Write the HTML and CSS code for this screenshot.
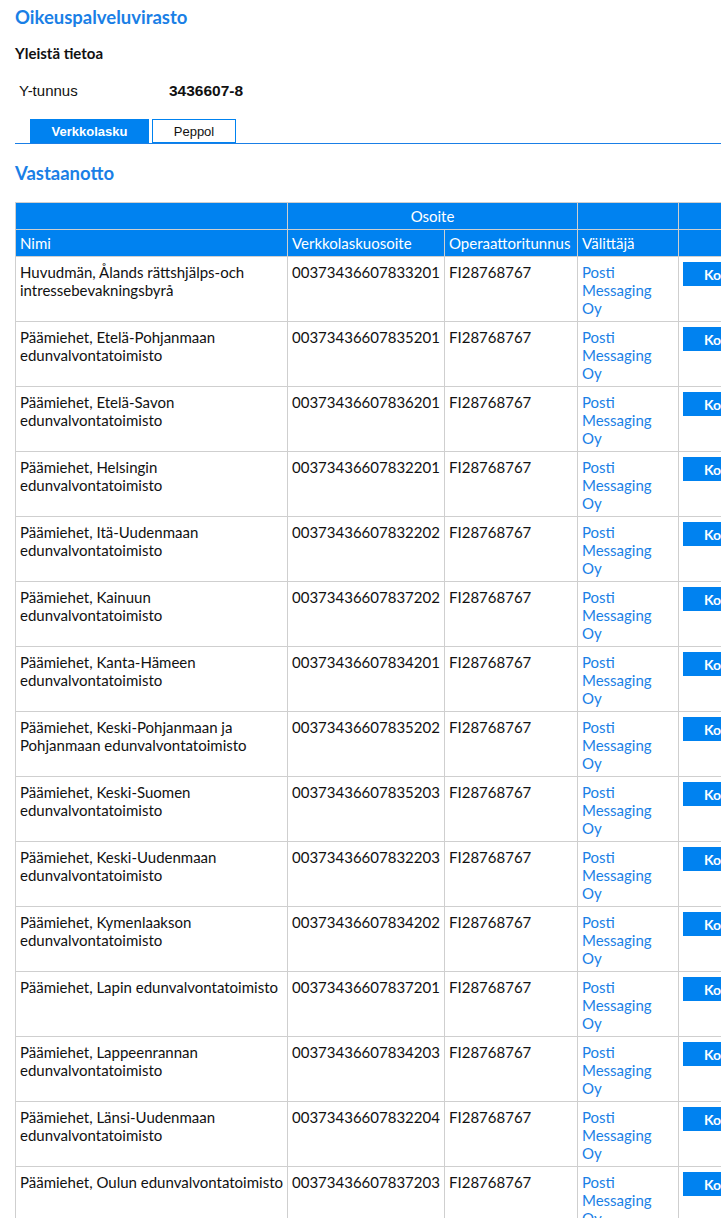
FILE: index.html
```html
<!DOCTYPE html>
<html lang="fi">
<head>
    <meta charset="UTF-8">
    <meta name="viewport" content="width=device-width, initial-scale=1.0">
    <title>Oikeuspalveluvirasto</title>
    <link rel="stylesheet" href="styles.css">
</head>
<body>
    <div class="page">
        <h1 class="org-title">Oikeuspalveluvirasto</h1>

        <h2 class="section-title">Yleistä tietoa</h2>
        <table class="info-table">
            <tr>
                <td class="info-label">Y-tunnus</td>
                <td class="info-value">3436607-8</td>
            </tr>
        </table>

        <div class="tabs">
            <button class="tab active">Verkkolasku</button>
            <button class="tab">Peppol</button>
        </div>

        <h2 class="sub-title">Vastaanotto</h2>

        <table class="address-table">
            <colgroup>
                <col class="col-name">
                <col class="col-address">
                <col class="col-operator">
                <col class="col-broker">
                <col class="col-action">
            </colgroup>
            <thead>
                <tr>
                    <th></th>
                    <th colspan="2" class="center">Osoite</th>
                    <th></th>
                    <th></th>
                </tr>
                <tr>
                    <th>Nimi</th>
                    <th>Verkkolaskuosoite</th>
                    <th>Operaattoritunnus</th>
                    <th>Välittäjä</th>
                    <th></th>
                </tr>
            </thead>
            <tbody id="rows"></tbody>
        </table>
    </div>

    <script>
        const rows = [
            ['Huvudmän, Ålands rättshjälps-och intressebevakningsbyrå', '00373436607833201'],
            ['Päämiehet, Etelä-Pohjanmaan edunvalvontatoimisto', '00373436607835201'],
            ['Päämiehet, Etelä-Savon edunvalvontatoimisto', '00373436607836201'],
            ['Päämiehet, Helsingin edunvalvontatoimisto', '00373436607832201'],
            ['Päämiehet, Itä-Uudenmaan edunvalvontatoimisto', '00373436607832202'],
            ['Päämiehet, Kainuun edunvalvontatoimisto', '00373436607837202'],
            ['Päämiehet, Kanta-Hämeen edunvalvontatoimisto', '00373436607834201'],
            ['Päämiehet, Keski-Pohjanmaan ja Pohjanmaan edunvalvontatoimisto', '00373436607835202'],
            ['Päämiehet, Keski-Suomen edunvalvontatoimisto', '00373436607835203'],
            ['Päämiehet, Keski-Uudenmaan edunvalvontatoimisto', '00373436607832203'],
            ['Päämiehet, Kymenlaakson edunvalvontatoimisto', '00373436607834202'],
            ['Päämiehet, Lapin edunvalvontatoimisto', '00373436607837201'],
            ['Päämiehet, Lappeenrannan edunvalvontatoimisto', '00373436607834203'],
            ['Päämiehet, Länsi-Uudenmaan edunvalvontatoimisto', '00373436607832204'],
            ['Päämiehet, Oulun edunvalvontatoimisto', '00373436607837203'],
            ['Päämiehet, Pirkanmaan edunvalvontatoimisto', '00373436607834204']
        ];

        const tbody = document.getElementById('rows');
        rows.forEach(function (row) {
            const tr = document.createElement('tr');
            tr.innerHTML =
                '<td>' + row[0] + '</td>' +
                '<td>' + row[1] + '</td>' +
                '<td>FI28768767</td>' +
                '<td><a href="#" class="broker-link">Posti Messaging Oy</a></td>' +
                '<td><button class="copy-btn">Kopioi</button></td>';
            tbody.appendChild(tr);
        });
    </script>
</body>
</html>
```

FILE: styles.css
```css
* {
    margin: 0;
    padding: 0;
    box-sizing: border-box;
}

body {
    font-family: 'Lato', 'Liberation Sans', sans-serif;
    color: #111;
    background: #fff;
}

.page {
    padding: 6px 0 0 15px;
}

.org-title {
    font-size: 18.5px;
    font-weight: bold;
    color: #1a7fe6;
    line-height: 22px;
    margin-bottom: 16px;
}

.section-title {
    font-size: 15px;
    font-weight: bold;
    line-height: 18px;
    margin-bottom: 18px;
}

.info-table {
    border-collapse: collapse;
    font-family: 'Liberation Sans', Arial, sans-serif;
    font-size: 15px;
    margin-bottom: 17px;
}

.info-table td {
    padding: 2px 4px;
    line-height: 18px;
}

.info-label {
    width: 150px;
}

.info-value {
    font-weight: bold;
    font-size: 15.5px;
}

.tabs {
    display: flex;
    gap: 3px;
    padding-left: 15px;
    border-bottom: 1px solid #1a7fe6;
}

.tab {
    font-family: 'Liberation Sans', Arial, sans-serif;
    font-size: 13px;
    height: 24px;
    border: 1px solid #0082f0;
    background: #fff;
    color: #111;
    cursor: pointer;
}

.tab:first-child {
    width: 119px;
}

.tab:last-child {
    width: 84px;
}

.tab.active {
    background: #0082f0;
    color: #fff;
    font-weight: bold;
}

.sub-title {
    font-size: 18.5px;
    font-weight: bold;
    color: #1a7fe6;
    line-height: 22px;
    margin: 18px 0 18px;
}

.address-table {
    border-collapse: collapse;
    table-layout: fixed;
    width: 800px;
    font-size: 15px;
    line-height: 18px;
}

.col-name { width: 272px; }
.col-address { width: 157px; }
.col-operator { width: 133px; }
.col-broker { width: 101px; }
.col-action { width: 137px; }

.address-table th,
.address-table td {
    border: 1px solid #cfcfcf;
    text-align: left;
    vertical-align: top;
}

.address-table th {
    background: #0082f0;
    color: #fff;
    font-weight: normal;
    padding: 4px 4px;
    height: 27px;
}

.address-table th.center {
    text-align: center;
}

.address-table td {
    padding: 6px 4px 4px;
    height: 64px;
}

.broker-link {
    color: #1a7fe6;
    text-decoration: none;
}

.copy-btn {
    display: block;
    margin-top: -1px;
    font-family: 'Lato', sans-serif;
    font-size: 14px;
    font-weight: bold;
    color: #fff;
    background: #0082f0;
    border: none;
    height: 24px;
    padding: 0 21px;
    cursor: pointer;
}
```
